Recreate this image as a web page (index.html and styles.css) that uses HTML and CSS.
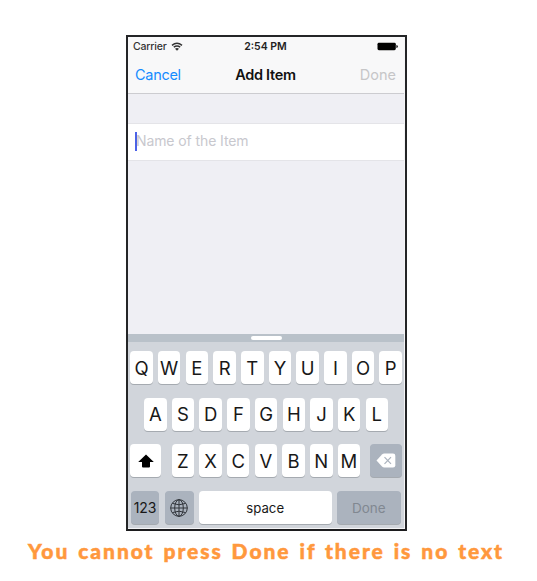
FILE: index.html
```html
<!DOCTYPE html>
<html lang="en">
<head>
<meta charset="utf-8">
<title>Add Item</title>
<link rel="stylesheet" href="styles.css">
</head>
<body>
<main class="page">
  <section class="phone">
    <header class="top">
      <div class="status">
        <div class="carrier"><span>Carrier</span>
          <svg class="wifi" viewBox="0 0 12 9" fill="none" stroke="#333" stroke-width="1.5"><path d="M1 3.3Q6-.7 11 3.3M2.8 5.2Q6 2.7 9.2 5.2"/><path d="M4 6.7Q6 5.2 8 6.7L6 8.7Z" fill="#333" stroke="none"/></svg>
        </div>
        <span class="time">2:54 PM</span>
        <svg class="battery" viewBox="0 0 21 9"><rect x=".5" y=".8" width="18.3" height="7.4" rx="1.4" fill="#000"/><path d="M19.3 3Q21 3.2 21 4.5T19.3 6Z" fill="#222"/></svg>
      </div>
      <nav class="nav"><span class="cancel">Cancel</span><strong class="title">Add Item</strong><span class="done">Done</span></nav>
    </header>
    <div class="content"><div class="field"><i class="caret"></i><span class="placeholder">Name of the Item</span></div></div>
    <div class="keyboard">
      <div class="suggest"><i class="handle"></i></div>
      <div class="row"><b class="key">Q</b><b class="key">W</b><b class="key">E</b><b class="key">R</b><b class="key">T</b><b class="key">Y</b><b class="key">U</b><b class="key">I</b><b class="key">O</b><b class="key">P</b></div>
      <div class="row middle"><b class="key">A</b><b class="key">S</b><b class="key">D</b><b class="key">F</b><b class="key">G</b><b class="key">H</b><b class="key">J</b><b class="key">K</b><b class="key">L</b></div>
      <div class="row">
        <b class="key shift"><svg width="16" height="14" viewBox="0 0 16 14"><path d="M8 .4 15.8 8H12V12.5Q12 13.6 11 13.6H5Q4 13.6 4 12.5V8H.2Z" fill="#000"/></svg></b>
        <b class="key">Z</b><b class="key">X</b><b class="key">C</b><b class="key">V</b><b class="key">B</b><b class="key">N</b><b class="key">M</b>
        <b class="key gray delete"><svg width="20" height="15" viewBox="0 0 20 15"><path d="M.5 7.5 6 1.5Q7 .5 8.3.5H17Q19.3.5 19.3 2.8V12.2Q19.3 14.5 17 14.5H8.3Q7 14.5 6 13.5Z" fill="#fff"/><path d="M8.5 4.2 15 10.8M15 4.2 8.5 10.8" stroke="#abb3be" stroke-width="1.2"/></svg></b>
      </div>
      <div class="row bottom">
        <b class="key gray numbers">123</b>
        <b class="key gray globe"><svg width="18" height="18" viewBox="0 0 18 18" fill="none" stroke="#30343a" stroke-width="1"><circle cx="9" cy="9" r="8.3"/><ellipse cx="9" cy="9" rx="4.3" ry="8.3"/><path d="M9 .7V17.3M.7 9H17.3M2.4 4.4Q9 7.2 15.6 4.4M2.4 13.6Q9 10.8 15.6 13.6"/></svg></b>
        <b class="key space">space</b><b class="key gray return">Done</b>
      </div>
    </div>
  </section>
  <p class="caption">You cannot press Done if there is no text</p>
</main>
</body>
</html>
```
FILE: styles.css
```css
* { box-sizing: border-box; }
body { margin: 0; background: #fff; font-family: Inter, "Liberation Sans", sans-serif; }
.page { width: 537px; height: 581px; padding: 35px 0 0 126px; overflow: hidden; }
.phone { width: 281px; height: 496px; border: 2px solid #242527; border-bottom-color: #1c1c1e; padding: 0 1px 1px 0; background: #f5f5f7; display: flex; flex-direction: column; }
.top { height: 57px; background: #f8f8f9; border-bottom: 1px solid #ccccd0; flex: none; }
.status { height: 19px; padding: 0 6px 0 5px; display: grid; grid-template-columns: 1fr auto 1fr; align-items: center; font-size: 10.5px; line-height: 19px; color: #333; }
.carrier { display: flex; align-items: center; gap: 4px; letter-spacing: -.2px; font-weight: 500; }
.wifi { width: 12px; height: 9px; }
.time { font-weight: 600; font-size: 10.5px; color: #222; letter-spacing: 0; }
.battery { width: 21px; height: 9px; justify-self: end; }
.nav { height: 36px; padding: 0 8px 0 7px; display: grid; grid-template-columns: 1fr auto 1fr; align-items: center; font-size: 14.5px; letter-spacing: -.3px; }
.cancel { color: #168bff; }
.title { font-weight: 600; color: #111; }
.done { color: #c6c6c8; text-align: right; letter-spacing: 0; }
.content { height: 240px; padding-top: 29px; background: #efeff4; flex: none; }
.field { height: 38px; background: #fff; border-top: 1px solid #e4e4e8; border-bottom: 1px solid #e4e4e8; display: flex; align-items: center; padding: 0 0 2px 7px; }
.caret { width: 2px; height: 19px; background: #4b62e8; flex: none; }
.placeholder { margin-left: -1px; font-size: 14px; line-height: 18px; color: #c8c8ce; letter-spacing: -.1px; }
.keyboard { flex: 1; background: #d1d5db; }
.suggest { height: 8px; background: #b9c1c9; display: flex; justify-content: center; align-items: center; }
.handle { width: 31px; height: 4px; border-radius: 2px; background: #fff; }
.row { display: flex; gap: 5.2px; height: 33px; padding-left: 2.3px; margin-top: 9px; }
.row + .row { margin-top: 13.7px; }
.row.middle { padding-left: 16.1px; }
.key { width: 22.5px; height: 33px; border-radius: 4px; background: #fff; box-shadow: 0 1px 0 #a5aab0; color: #181818; font-weight: 400; font-size: 18.5px; display: flex; align-items: center; justify-content: center; flex: none; }
.gray { background: #abb3be; }
.shift { width: 31.2px; margin-right: 4.9px; }
.delete { width: 31.2px; margin-left: 5px; }
.row.bottom { padding-left: 2.7px; }
.key.numbers { width: 28.8px; font-size: 14px; }
.key.globe { width: 29px; }
.key.space { width: 132.7px; font-size: 13.2px; }
.key.return { width: 64px; font-size: 13.5px; color: #818891; }
.caption { width: 500px; margin: 6px 0 0 -98px; font: 900 21px/28px Lato, "Liberation Sans", sans-serif; letter-spacing: 1.95px; word-spacing: 2px; color: #ff983d; -webkit-text-stroke: .5px #ff983d; white-space: nowrap; }
```
